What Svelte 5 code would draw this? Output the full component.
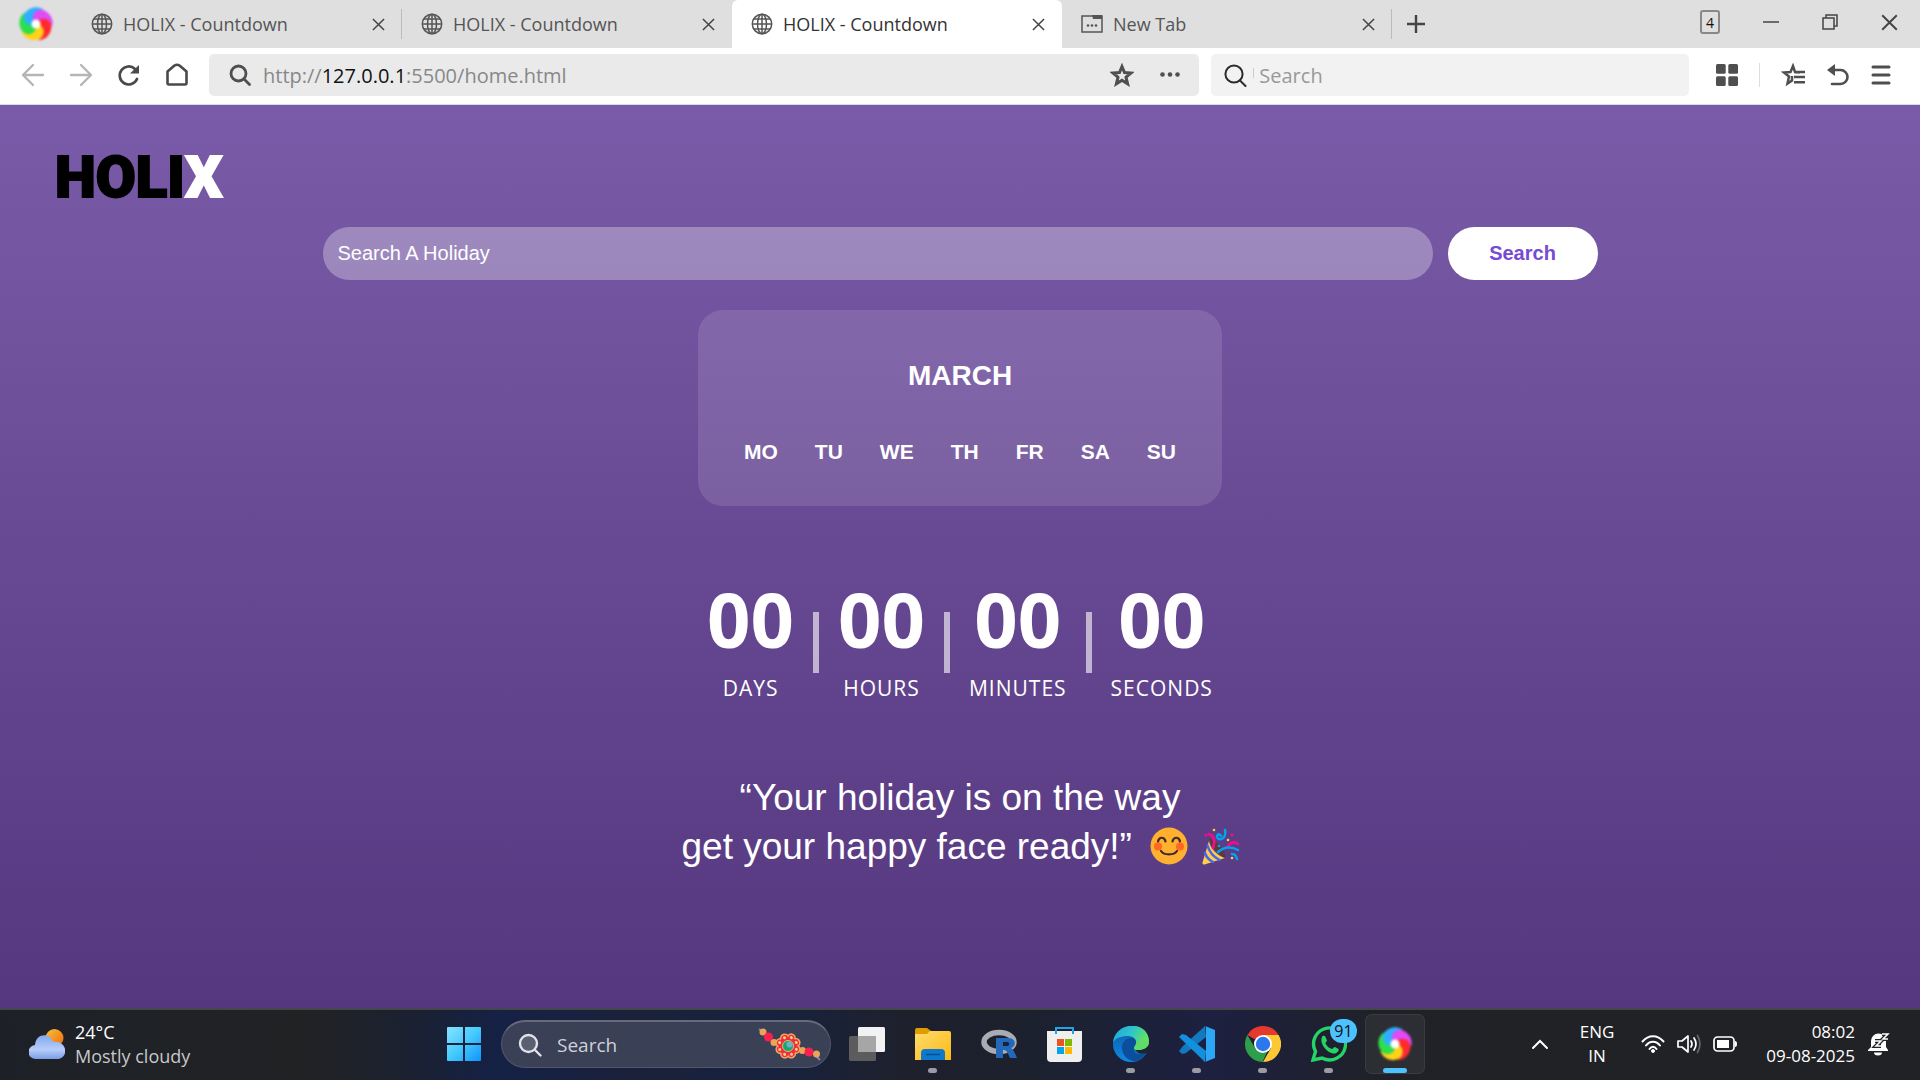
<script lang="ts">
  const tabs = [
    { title: 'HOLIX - Countdown', kind: 'web', active: false },
    { title: 'HOLIX - Countdown', kind: 'web', active: false },
    { title: 'HOLIX - Countdown', kind: 'web', active: true },
    { title: 'New Tab', kind: 'blank', active: false },
  ];
  const days = ['MO', 'TU', 'WE', 'TH', 'FR', 'SA', 'SU'];
  const units = [
    { value: '00', label: 'DAYS' },
    { value: '00', label: 'HOURS' },
    { value: '00', label: 'MINUTES' },
    { value: '00', label: 'SECONDS' },
  ];
  const petals = ['#2fb0ff', '#e04bf5', '#ff2a30', '#ffd21a', '#2be04a'];
</script>

{#snippet swirl()}
  <svg class="swirl" width="36" height="36" viewBox="0 0 36 36" aria-hidden="true">
    {#each petals as color, i}
      <path
        d="M18 19C8 22 3 13 7 7C11 1 20 -1 26 4C19 3 14 9 18 19Z"
        fill={color}
        transform="rotate({i * 72} 18 18)"
      />
    {/each}
    <path d="M18 19C8 22 3 13 7 7C10 6 12 8 12 12C12 16 15 18 18 19Z" fill="#2fb0ff" />
    <circle cx="18" cy="18" r="4.500" fill="#fff" />
  </svg>
{/snippet}

{#snippet cross(size: number)}
  <svg width={size} height={size} viewBox="0 0 14 14" fill="none" stroke="#444" stroke-width="1.6" aria-hidden="true">
    <path d="M1 1 13 13M13 1 1 13" />
  </svg>
{/snippet}

<div class="screen">
  <div class="tabbar">
    <button class="brand" aria-label="Browser menu">{@render swirl()}</button>
    {#each tabs as tab, i}
      <div class="tab" class:active={tab.active} class:divided={i === 0 || i === 3}>
        <button class="tab-title">
          {#if tab.kind === 'web'}
            <svg width="22" height="22" viewBox="0 0 22 22" fill="none" stroke="#555" stroke-width="1.5" aria-hidden="true">
              <circle cx="11" cy="11" r="9.7" /><ellipse cx="11" cy="11" rx="4.5" ry="9.7" />
              <path d="M11 1v20M1.300 11h19.400M2.500 6h17M2.500 16h17" />
            </svg>
          {:else}
            <svg width="22" height="22" viewBox="0 0 22 22" fill="#555" aria-hidden="true">
              <rect x="1" y="3" width="20" height="16" fill="none" stroke="#555" stroke-width="1.5" />
              <path d="M11 2h10v4H12Z" /><circle cx="7" cy="12.500" r="1.300" /><circle cx="11" cy="12.500" r="1.300" /><circle cx="15" cy="12.500" r="1.300" />
            </svg>
          {/if}
          <span>{tab.title}</span>
        </button>
        <button class="close" aria-label="Close tab">{@render cross(13)}</button>
      </div>
    {/each}
    <button class="plus" aria-label="New tab">
      <svg width="18" height="18" viewBox="0 0 18 18" stroke="#444" stroke-width="2.400" aria-hidden="true"><path d="M9 0v18M0 9h18" /></svg>
    </button>
    <div class="window-controls">
      <button class="count" aria-label="Open tabs">4</button>
      <button aria-label="Minimize"><svg width="16" height="18" viewBox="0 0 16 18" stroke="#444" stroke-width="1.500" aria-hidden="true"><path d="M0 9h16" /></svg></button>
      <button aria-label="Restore">
        <svg width="16" height="18" viewBox="0 0 16 18" fill="none" stroke="#444" stroke-width="1.500" aria-hidden="true"><path d="M1 5h11v11H1ZM4 5V2h11v11h-3" /></svg>
      </button>
      <button aria-label="Close">{@render cross(17)}</button>
    </div>
  </div>

  <div class="toolbar">
    <div class="nav">
      <button aria-label="Back"><svg width="24" height="24" viewBox="0 0 24 24" fill="none" stroke="#b5b5b5" stroke-width="2.300" stroke-linecap="round" stroke-linejoin="round" aria-hidden="true"><path d="M22 12H2M12 2 2 12l10 10" /></svg></button>
      <button aria-label="Forward"><svg width="24" height="24" viewBox="0 0 24 24" fill="none" stroke="#b5b5b5" stroke-width="2.300" stroke-linecap="round" stroke-linejoin="round" aria-hidden="true"><path d="M2 12h20M12 2l10 10-10 10" /></svg></button>
      <button aria-label="Reload"><svg width="24" height="24" viewBox="0 0 24 24" fill="none" stroke="#4a4a4a" stroke-width="2.700" stroke-linecap="round" aria-hidden="true"><path d="M20 16a9 9 0 1 1-2-10" /><path d="M22 2v8.500h-9Z" fill="#4a4a4a" stroke="none" /></svg></button>
      <button aria-label="Home"><svg width="24" height="24" viewBox="0 0 24 24" fill="none" stroke="#4a4a4a" stroke-width="2.600" stroke-linejoin="round" aria-hidden="true"><path d="M2.500 8.500 9.500 2.500Q12 1 14.500 2.500L21.500 8.500V20Q21.500 21.500 20 21.500H4Q2.500 21.500 2.500 20Z" /></svg></button>
    </div>
    <div class="address">
      <svg width="22" height="22" viewBox="0 0 22 22" fill="none" stroke="#4f4f4f" stroke-width="2.800" stroke-linecap="round" aria-hidden="true"><circle cx="9.500" cy="9.500" r="7.500" /><path d="m15 15 5.500 5.500" /></svg>
      <div class="url" role="textbox" tabindex="0" aria-label="Address">http://<b>127.0.0.1</b>:5500/home.html</div>
      <button aria-label="Bookmark"><svg width="24" height="24" viewBox="0 0 24 24" fill="none" stroke="#4f4f4f" stroke-width="3" aria-hidden="true"><path d="m12 3.500 2.500 6 6.500.500-5 4.200 1.600 6.600L12 17.200l-5.600 3.600L8 14.200 3 10l6.500-.5Z" /></svg></button>
      <button aria-label="Page actions"><svg width="20" height="24" viewBox="0 0 20 24" fill="#4f4f4f" aria-hidden="true"><circle cx="2.500" cy="11.500" r="2.300" /><circle cx="10" cy="11.500" r="2.300" /><circle cx="17.500" cy="11.500" r="2.300" /></svg></button>
    </div>
    <label class="websearch">
      <svg width="23" height="23" viewBox="0 0 23 23" fill="none" stroke="#2b2b2b" stroke-width="2" stroke-linecap="round" aria-hidden="true"><circle cx="10" cy="10" r="8.600" /><path d="m16 16.500 5.500 5.500" /></svg>
      <i></i>
      <input type="text" placeholder="Search" aria-label="Web search" />
    </label>
    <div class="tools">
      <button aria-label="Apps"><svg width="22" height="22" viewBox="0 0 22 22" fill="#4f4f4f" aria-hidden="true"><rect width="9.700" height="9.700" rx="1.500" /><rect x="12.300" width="9.700" height="9.700" rx="1.500" /><rect y="12.300" width="9.700" height="9.700" rx="1.500" /><rect x="12.300" y="12.300" width="9.700" height="9.700" rx="1.500" /></svg></button>
      <i></i>
      <button aria-label="Bookmarks"><svg width="24" height="24" viewBox="0 0 24 24" fill="none" stroke="#4f4f4f" stroke-width="2.500" aria-hidden="true"><path d="M19 9.200 14 9 12 3 9.500 9 3 9.500 8 13.500 6.500 20.500 11 17.500V13" /><path d="M14 9h10M13 14h11M13 19.200h11" /></svg></button>
      <button aria-label="Undo"><svg width="24" height="24" viewBox="0 0 24 24" fill="none" stroke="#4f4f4f" stroke-width="2.600" stroke-linecap="round" aria-hidden="true"><path d="M5 7h9.500a7 7 0 0 1 0 14H6" /><path d="M9 1v12L1 7Z" fill="#4f4f4f" stroke="none" /></svg></button>
      <button aria-label="Menu"><svg width="20" height="22" viewBox="0 0 20 22" stroke="#4f4f4f" stroke-width="3" stroke-linecap="round" aria-hidden="true"><path d="M2 3h16M2 11h16M2 19h16" /></svg></button>
    </div>
  </div>

  <main>
    <header><a class="logo" href="/home.html">HOLI<span>X</span></a></header>
    <form class="finder" onsubmit={(e) => e.preventDefault()}>
      <input type="text" placeholder="Search A Holiday" aria-label="Search a holiday" />
      <button type="submit">Search</button>
    </form>
    <section class="calendar">
      <h2>MARCH</h2>
      <ul>
        {#each days as day}<li>{day}</li>{/each}
      </ul>
    </section>
    <section class="countdown">
      {#each units as unit, i}
        {#if i > 0}<i class="bar"></i>{/if}
        <div class="unit"><strong>{unit.value}</strong><span>{unit.label}</span></div>
      {/each}
    </section>
    <p class="quote">
      “Your holiday is on the way<br />get your happy face ready!”
      <svg class="emoji" width="38" height="38" viewBox="0 0 38 38" fill="none" stroke-linecap="round" role="img" aria-label="Smiling face">
        <circle cx="19" cy="19" r="18.500" fill="#ffb02e" />
        <circle cx="8" cy="19.500" r="4" fill="#ff6723" /><circle cx="30" cy="19.500" r="4" fill="#ff6723" />
        <path d="M8 14.500c1-5 6.500-5 7.500 0M22.500 14.500c1-5 6.500-5 7.500 0M11 24c3 4.500 13 4.500 16 0" stroke="#402a32" stroke-width="2.200" />
      </svg>
      <svg class="emoji" width="38" height="38" viewBox="0 0 38 38" fill="none" stroke-linecap="round" role="img" aria-label="Party popper">
        <path d="M8 14 1.500 35.500Q1 38 3.500 37.500L24 31C17 29 9 22 8 14Z" fill="#ffce4a" />
        <path d="M6.500 18.500Q9 28 18.500 33M4 26q2 6 8 9" stroke="#4965f0" stroke-width="2.500" />
        <path d="M8 12c7 1 17 11 16 19-6-3-14-11-16-19Z" fill="#5c3a35" />
        <path d="M8 7q8 3 4 14M27 19q5-6 10-2" stroke="#f70a8d" stroke-width="2.500" />
        <path d="M17 25q9-8 20-2M20 9c-3-5-6 2-2 3 5 1 7-4 6-9M31 27q4 0 5 5" stroke="#00a6ed" stroke-width="2.500" />
        <circle cx="5" cy="8" r="1.500" fill="#f70a8d" /><circle cx="31" cy="8" r="1.500" fill="#f70a8d" /><circle cx="13" cy="3" r="1.300" fill="#ffce4a" /><circle cx="27" cy="13" r="1.300" fill="#ffce4a" /><circle cx="31" cy="31" r="1.300" fill="#ffce4a" /><circle cx="18" cy="19" r="1.300" fill="#00a6ed" />
      </svg>
    </p>
  </main>

  <footer class="taskbar">
    <button class="weather">
      <svg width="36" height="32" viewBox="0 0 36 32" aria-hidden="true">
        <defs>
          <linearGradient id="sun" x2="1" y2="1"><stop stop-color="#f6c43a" /><stop offset="1" stop-color="#f2670c" /></linearGradient>
          <linearGradient id="cloud" x2="0" y2="1"><stop stop-color="#84a7ee" /><stop offset=".6" stop-color="#b7cdfa" /><stop offset="1" stop-color="#7c9de6" /></linearGradient>
        </defs>
        <circle cx="25.500" cy="10" r="9" fill="url(#sun)" />
        <path d="M7 31a7 7 0 0 1-1-14C7 4 22 5 24 14c15-2 16 17 4 17Z" fill="url(#cloud)" />
      </svg>
      <span class="lines"><span>24°C</span><span class="dim">Mostly cloudy</span></span>
    </button>

    <div class="apps">
      <button class="app" aria-label="Start">
        <svg width="36" height="36" viewBox="0 0 36 36" aria-hidden="true">
          <defs><linearGradient id="win" gradientUnits="userSpaceOnUse" x1="0" y1="0" x2="36" y2="36"><stop stop-color="#8ae3ff" /><stop offset=".5" stop-color="#43c9fd" /><stop offset="1" stop-color="#0b8ffc" /></linearGradient></defs>
          <path fill="url(#win)" d="M0 2q0-1 1-1h15v16H0ZM18 1h15q1 0 1 1v15H18ZM0 19h16v16H1q-1 0-1-1ZM18 19h16v15q0 1-1 1H18Z" />
        </svg>
      </button>
      <label class="tasksearch">
        <svg width="24" height="24" viewBox="0 0 24 24" fill="none" stroke="#e2e2e8" stroke-width="2.400" stroke-linecap="round" aria-hidden="true"><circle cx="10.500" cy="10.500" r="8.500" fill="#5a5f72" /><path d="m17 17 5.500 5.500" /></svg>
        <input type="text" placeholder="Search" aria-label="Search this computer" />
        <svg width="66" height="36" viewBox="0 0 66 36" aria-hidden="true">
          <path d="M2 2 6 5M58 28l5 5" stroke="#8b78c4" stroke-width="2" />
          <circle cx="6" cy="5" r="3.500" fill="#e9a458" /><circle cx="11.500" cy="10" r="4.500" fill="#f91f4e" /><circle cx="17" cy="15.500" r="3.500" fill="#e9a458" />
          {#each [0, 45, 90, 135, 180, 225, 270, 315] as a}
            <circle cx="31" cy="10.500" r="4" fill="#ee2c46" stroke="#f3a961" stroke-width="1.500" transform="rotate({a + 22} 31 19)" />
          {/each}
          <circle cx="31" cy="19" r="9.500" fill="#ee2c46" />
          {#each [0, 45, 90, 135, 180, 225, 270, 315] as a}
            <circle cx="31" cy="10" r="1.500" fill="#ffd46a" transform="rotate({a + 22} 31 19)" />
          {/each}
          <circle cx="31" cy="19" r="5.500" fill="#18a674" stroke="#f3b561" /><circle cx="32.500" cy="17.500" r="3" fill="#65b7c7" />
          <circle cx="45.500" cy="23.500" r="3.500" fill="#e9a458" /><circle cx="52" cy="25" r="4.500" fill="#f91f4e" /><circle cx="59.500" cy="27" r="3.500" fill="#e9a458" />
        </svg>
      </label>
      <button class="app" aria-label="Task view">
        <svg width="36" height="36" viewBox="0 0 36 36" aria-hidden="true"><rect x="9" y="1" width="27" height="25" rx="1.500" fill="#f2f2f2" /><rect x="0" y="10" width="27" height="25" rx="1.500" fill="#5c5c5c" /><path d="M9 10h18v16H9Z" fill="#a6a6a6" /></svg>
      </button>
      <button class="app open" aria-label="File Explorer">
        <svg width="36" height="36" viewBox="0 0 36 36" aria-hidden="true">
          <defs><linearGradient id="folder" x2="1" y2="1"><stop stop-color="#ffdc70" /><stop offset="1" stop-color="#fcb910" /></linearGradient></defs>
          <path d="M0 4q0-2 2-2h10l4 3v5H0Z" fill="#e09d00" /><path d="M0 8h12l3-3h19q2 0 2 2v27H0Z" fill="url(#folder)" />
          <path d="M6 34V27q0-4 4-4h16q4 0 4 4v7Z" fill="#0e78cc" /><path d="M11 28.500h14" stroke="#064f91" stroke-width="1.500" />
        </svg>
      </button>
      <button class="app" aria-label="R">
        <svg width="36" height="36" viewBox="0 0 36 36" aria-hidden="true">
          <ellipse cx="18" cy="16" rx="15" ry="9.500" fill="none" stroke="#a9acb2" stroke-width="5.500" />
          <path fill="#2268bb" fill-rule="evenodd" d="M15 12h12c9 0 8 9 3 10 2 1 5 7 6 10h-7c-2-4-3-8-6-8h-1v8h-7ZM22 16v4h4c3 0 3-4 0-4Z" />
        </svg>
      </button>
      <button class="app" aria-label="Microsoft Store">
        <svg width="36" height="36" viewBox="0 0 36 36" aria-hidden="true"><path d="M0 5h35v27q0 4-4 4H4q-4 0-4-4Z" fill="#efefef" /><path d="M9 8V2h17v6" fill="none" stroke="#22a3e4" stroke-width="2" /><path d="M10 13h7v7h-7Z" fill="#f25022" /><path d="M18 13h7v7h-7Z" fill="#7fba00" /><path d="M10 21h7v7h-7Z" fill="#00a4ef" /><path d="M18 21h7v7h-7Z" fill="#ffb900" /></svg>
      </button>
      <button class="app open" aria-label="Edge">
        <svg width="36" height="36" viewBox="0 0 36 36" aria-hidden="true">
          <defs>
            <linearGradient id="edgetop" x2="1" y2=".4"><stop stop-color="#1ca3e0" /><stop offset=".55" stop-color="#30c6c9" /><stop offset="1" stop-color="#68e35a" /></linearGradient>
            <linearGradient id="edgeleft" x2="0" y2="1"><stop stop-color="#0c5aa6" /><stop offset="1" stop-color="#1089e4" /></linearGradient>
          </defs>
          <circle cx="18" cy="18" r="18" fill="url(#edgeleft)" />
          <path d="M0 17C2-5 34-6 36 14c0 8-6 10-11 10-4 0-5-2-3-4 3-4 0-10-7-10C8 10 2 12 0 17Z" fill="url(#edgetop)" />
          <path d="M12 18c-2 8 4 16 14 17-7 2-16-3-17-12-1-6 4-12 11-11 3 1 4 4 2 7-3 5 0 9 5 9 3 0 5-1 7-2-3 6-8 9-13 9-7-2-11-9-9-17Z" fill="#0b4f9c" />
          <path d="M22 20c-2 2-1 4 3 4 5 0 9-2 11-6v8c-1 1-9 4-13-1-2-2-2-4-1-5Z" fill="#1f2432" />
          <path d="M36 17c-1 5-6 7-11 7-4 0-5-2-3-4 3-4 5-10 14-3Z" fill="#5fdd68" />
        </svg>
      </button>
      <button class="app open" aria-label="Visual Studio Code">
        <svg width="36" height="36" viewBox="0 0 36 36" aria-hidden="true"><path d="M26 0 4 20l-4 5 3 3 4-1L27 11Z" fill="#1279be" /><path d="M0 11 3 8l4 1 20 16-1 11Z" fill="#1390dd" /><path d="M26 0l10 4v28l-10 4c1-1 1-2 1-3V3c0-1 0-2-1-3Z" fill="#2ba7f4" /></svg>
      </button>
      <button class="app open" aria-label="Chrome">
        <svg width="36" height="36" viewBox="0 0 36 36" aria-hidden="true"><path d="M18 18 2.400 9A18 18 0 0 1 33.600 9Z" fill="#e6392d" /><path d="M18 9h15.600A18 18 0 0 1 18 36l8-14Z" fill="#fcc934" /><path d="M2.400 9 10.200 22.500 18 27l4-1-4.500 10A18 18 0 0 1 2.400 9Z" fill="#2f9e4a" /><circle cx="18" cy="18" r="9" fill="#fff" /><circle cx="18" cy="18" r="7.200" fill="#2a78ec" /></svg>
      </button>
      <button class="app open" aria-label="WhatsApp, 91 unread">
        <svg width="36" height="36" viewBox="0 0 36 36" fill="none" aria-hidden="true"><path d="M2 34 4.500 25.500A16 16 0 1 1 11 32Z" stroke="#25d366" stroke-width="3.400" /><path d="M11 11c1-2 3-1 3.500 0l1.500 3.500c0 1-2 2-1.500 3 1.500 3 4 5 6.500 5.500 1 0 2-2.500 3-2l3.500 2c1 2-2 4.500-4 4.500C17 28 8 18 11 11Z" fill="#25d366" /></svg>
        <span class="badge">91</span>
      </button>
      <button class="app open current" aria-label="Browser">{@render swirl()}</button>
    </div>

    <div class="tray">
      <button class="chevron" aria-label="Hidden icons"><svg width="18" height="12" viewBox="0 0 18 12" fill="none" stroke="#fff" stroke-width="2" stroke-linecap="round" aria-hidden="true"><path d="m2 10 7-7 7 7" /></svg></button>
      <button class="lines language"><span>ENG</span><span>IN</span></button>
      <button class="status" aria-label="Network, sound and battery">
        <svg width="24" height="20" viewBox="0 0 24 20" fill="none" stroke="#fff" stroke-width="2" stroke-linecap="round" aria-hidden="true"><path d="M1.500 7.500c6-7 15-7 21 0M5 11.500c4-5 10-5 14 0M8.500 15c2-3 5-3 7 0" /><circle cx="12" cy="17" r="1.500" fill="#fff" stroke-width="1" /></svg>
        <svg width="24" height="20" viewBox="0 0 24 20" fill="none" stroke="#fff" stroke-width="1.700" stroke-linecap="round" stroke-linejoin="round" aria-hidden="true"><path d="M1 7h4l6-5v16l-6-5H1ZM14 7q2 3 0 6M17 4q4 6 0 12" /><path d="M20.500 1.500q5 8.500 0 17" stroke="#666" /></svg>
        <svg width="24" height="18" viewBox="0 0 24 18" fill="none" stroke="#fff" stroke-width="1.700" aria-hidden="true"><rect x="1" y="2" width="20" height="14" rx="3.500" /><path d="M4 5h12v8H4Z" fill="#fff" stroke="none" /><path d="M22 6q2 0 2 3t-2 3Z" fill="#fff" stroke="none" /></svg>
      </button>
      <button class="lines clock"><span>08:02</span><span>09-08-2025</span></button>
      <button class="bell" aria-label="Notifications">
        <svg width="22" height="24" viewBox="0 0 22 24" aria-hidden="true"><path d="M3 9a7.500 7.500 0 0 1 15 0v6l2 3v1H0v-1l3-3ZM6 20.500h8a4 3 0 0 1-8 0Z" fill="#fff" /><path d="M7 9h6l-5 5h5M14 2h6l-5 5h5" fill="none" stroke="#202226" stroke-width="4" /><path d="M7 9h6l-5 5h5M14 2h6l-5 5h5" fill="none" stroke="#fff" stroke-width="1.500" /></svg>
      </button>
    </div>
  </footer>
</div>

<style>
  :global(body) { margin: 0; }
  .screen {
    min-height: 100vh;
    display: flex;
    flex-direction: column;
    font-family: "Open Sans", "Noto Sans", sans-serif;
  }
  button { border: 0; background: none; padding: 0; margin: 0; font: inherit; color: inherit; display: flex; align-items: center; cursor: pointer; }
  input { border: 0; background: none; padding: 0; margin: 0; font: inherit; min-width: 0; outline: none; }
  svg { flex: none; display: block; }
  .swirl { filter: blur(1px); }

  .tabbar { display: flex; height: 48px; background: #dfdfdf; color: #555; font-size: 18px; }
  .brand { width: 72px; justify-content: center; flex: none; }
  .tab { flex: 0 1 330px; min-width: 0; display: flex; align-items: center; justify-content: space-between; box-sizing: border-box; padding: 0 17px 0 19px; }
  .divided { background: linear-gradient(#bbb, #bbb) right center / 1px 30px no-repeat; }
  .tab-title { gap: 10px; white-space: nowrap; }
  .active { background: #fff; border-radius: 6px 6px 0 0; color: #333; }
  .plus { margin-left: 15px; }
  .window-controls { margin-left: auto; padding: 0 22px 4px 0; display: flex; align-items: center; gap: 43px; }
  .count { width: 20px; height: 24px; box-sizing: border-box; border: 2px solid #888; border-radius: 3px; justify-content: center; font-size: 14px; color: #111; }

  .toolbar { display: flex; align-items: center; height: 57px; box-sizing: border-box; border-bottom: 1px solid #dcdce4; padding: 0 29px 2px 21px; background: #fff; }
  .nav { display: flex; gap: 24px; width: 188px; flex: none; }
  .address { flex: 992 1 0; min-width: 0; display: flex; align-items: center; height: 42px; box-sizing: border-box; padding: 0 19px 0 20px; gap: 26px; background: #eaeaea; border-radius: 5px; }
  .url { flex: 1; font-size: 20px; color: #888; margin-left: -14px; white-space: nowrap; outline: none; }
  .url b { font-weight: 400; color: #111; }
  .websearch { flex: 471 1 0; min-width: 0; margin-left: 12px; display: flex; align-items: center; height: 42px; box-sizing: border-box; padding: 0 13px; background: #f2f2f2; border-radius: 5px; font-size: 20px; }
  .websearch input { flex: 1; color: #333; }
  .websearch input::placeholder { color: #999; opacity: 1; }
  .websearch i { width: 1px; height: 10px; margin: 0 5px 4px 6px; background: #ccc; }
  .tools { display: flex; align-items: center; gap: 21px; margin-left: 27px; }
  .tools i { width: 1px; height: 24px; background: #ddd; }

  main {
    flex: 1;
    display: flex;
    flex-direction: column;
    align-items: center;
    background: linear-gradient(#795ba9, #6a4c96 42%, #553780);
    color: #fff;
    font-family: "Liberation Sans", Arial, sans-serif;
  }
  header { align-self: stretch; box-sizing: border-box; height: 122px; padding: 41px 55px 0; }
  .logo { font: 900 58px/62px Roboto, "Liberation Sans", sans-serif; color: #000; text-decoration: none; -webkit-text-stroke: 2px #000; }
  .logo span { color: #fff; -webkit-text-stroke-color: #fff; }
  .finder { display: flex; gap: 15px; width: 1275px; max-width: 90%; font-size: 20px; }
  .finder input { flex: 1; height: 53px; box-sizing: border-box; padding: 0 15px; border-radius: 27px; background: rgba(255, 255, 255, 0.3); color: #fff; }
  .finder input::placeholder { color: #fff; opacity: 1; }
  .finder button { width: 150px; justify-content: center; border-radius: 27px; background: #fff; color: #764bd4; font-weight: 700; }
  .calendar { margin-top: 30px; padding: 50px 46px 38px; border-radius: 25px; background: rgba(255, 255, 255, 0.12); }
  h2 { margin: 0; font-size: 28px; line-height: 32px; text-align: center; }
  ul { list-style: none; display: flex; gap: 37px; margin: 44px 0 0; padding: 0; font-size: 21px; line-height: 32px; font-weight: 700; }
  .countdown { display: flex; align-items: center; gap: 19px; margin-top: 75px; font-family: "Open Sans", "Noto Sans", sans-serif; }
  .unit { display: flex; flex-direction: column; align-items: center; gap: 16px; }
  .unit strong { font-size: 76px; line-height: 76px; }
  .unit span { font-size: 21px; line-height: 30px; letter-spacing: 1px; }
  .bar { width: 6px; height: 61px; background: rgba(255, 255, 255, 0.6); }
  .quote { margin: 70px 0 60px; font-size: 37px; line-height: 49px; text-align: center; }
  .emoji { display: inline-block; vertical-align: -6px; margin-left: 8px; }
  .emoji + .emoji { margin-left: 2px; }

  .taskbar {
    display: grid;
    grid-template-columns: 435fr auto 495fr;
    align-items: center;
    height: 72px;
    box-sizing: border-box;
    border-top: 2px solid #45474c;
    padding-bottom: 2px;
    background: linear-gradient(90deg, #1d2127, #212224 16%, #1b2130 21%, #152145 26%, #1b213a 33%, #17223f 40%, #1e202c 47%, #1c212d 53%, #1d2040 63%, #1f2128 72%, #202226 78%);
    color: #fff;
    font-size: 17px;
  }
  .weather { margin-left: 29px; gap: 10px; font-size: 18px; }
  .lines { display: flex; flex-direction: column; align-items: flex-start; line-height: 24px; white-space: nowrap; }
  .dim { color: #c8c8ca; }
  .apps { display: flex; align-items: center; gap: 6px; }
  .app { position: relative; width: 60px; height: 60px; justify-content: center; box-sizing: border-box; border-radius: 7px; }
  .open::after { content: ""; position: absolute; left: 50%; bottom: 1px; width: 9px; height: 5px; margin-left: -5px; border-radius: 3px; background: #9a9ba3; }
  .current { background: #2d2e33; box-shadow: inset 0 0 0 1px #3a3b40; }
  .current::after { width: 24px; margin-left: -12px; background: #4cc2ff; }
  .badge { position: absolute; top: 5px; right: 2px; width: 27px; height: 24px; border-radius: 12px; background: #4cc2ff; color: #111; font-size: 16px; line-height: 24px; text-align: center; }
  .tasksearch { display: flex; align-items: center; width: 330px; height: 48px; box-sizing: border-box; padding: 0 7px 0 16px; gap: 15px; border: 1px solid #51566a; border-top: 2px solid #666a7a; border-radius: 24px; background: #3a4056; font-size: 19px; }
  .tasksearch input { flex: 1; color: #fff; }
  .tasksearch input::placeholder { color: #d0d1d8; opacity: 1; }
  .tray { display: flex; align-items: center; justify-content: flex-end; padding-right: 30px; }
  .chevron { margin-right: 31px; }
  .language { align-items: center; margin-right: 27px; }
  .status { gap: 12px; margin-right: 29px; }
  .clock { align-items: flex-end; margin-right: 13px; }
</style>
